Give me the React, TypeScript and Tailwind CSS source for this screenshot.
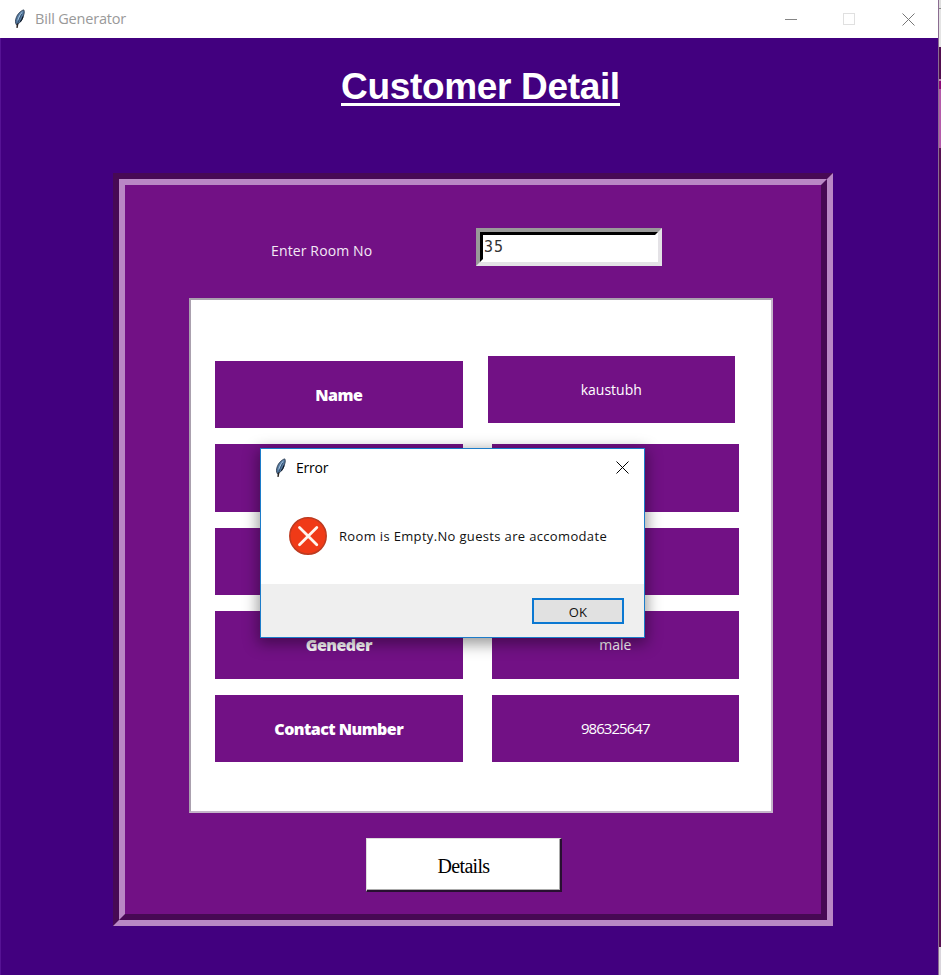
import type { ReactNode } from "react";

const LABELS = ["Name", "", "", "Geneder", "Contact Number"];
const VALUES = ["kaustubh", "", "", "male", "986325647"];

function Feather({ className = "" }: { className?: string }) {
  return (
    <svg width="14" height="20" viewBox="0 0 14 20" className={className}>
      <path d="M10.800 .9C8 1.500 4.600 4.600 3.200 8.800C2.200 11.700 2.200 14 3.600 16C6.500 14.600 9 11.300 10.100 8C11 5.200 11.800 2.600 10.800 .9Z" fill="#54799f" stroke="#2b3b50" strokeWidth=".9" />
      <path d="M9.900 2.300C7.500 3.800 5.200 7.500 4.200 11.800L5.600 11C6.800 7.500 8.600 4.800 9.900 2.300Z" fill="#a5c3de" />
      <path d="M8.600 5C7 8.500 5.500 12 4.600 15" fill="none" stroke="#2c4563" strokeWidth=".8" />
      <path d="M4.700 14.500L4 18.800" fill="none" stroke="#2a2421" strokeWidth="1.500" />
      <path d="M10 7.500L8.900 10.300L7.300 12.700" fill="none" stroke="#0e1622" strokeWidth="1.100" />
    </svg>
  );
}

function Cross({ color }: { color: string }) {
  return (
    <svg width="13" height="13" viewBox="0 0 13 13">
      <path d="M.5 .5L12.500 12.500M12.500 .5L.5 12.500" stroke={color} strokeWidth="1" />
    </svg>
  );
}

function Cell({ children, className = "" }: { children: ReactNode; className?: string }) {
  return (
    <div className={`flex h-[67.500px] w-[247.500px] shrink-0 items-center justify-center bg-[#721185] text-white ${className}`}>
      {children}
    </div>
  );
}

function ErrorDialog() {
  return (
    <div className="absolute left-[260px] top-[448px] flex h-[190px] w-[385px] flex-col border border-[#1c7cc9] bg-white shadow-[0_4px_14px_2px_rgba(0,0,0,0.4)]">
      <div className="flex h-[37px] shrink-0 items-center pl-[13px] pr-[15px]">
        <Feather />
        <span className="ml-2 text-[14px] tracking-[-0.200px] text-black">Error</span>
        <span className="ml-auto"><Cross color="#000" /></span>
      </div>
      <div className="flex grow items-center pl-7 pt-px">
        <svg width="38" height="38" viewBox="0 0 38 38" className="shrink-0">
          <circle cx="19" cy="19" r="18.200" fill="#f03a17" stroke="#bd3a20" strokeWidth="1.500" />
          <path d="M10.500 10.500L27.800 27.800M27.800 10.500L10.500 27.800" stroke="#fff5ee" strokeWidth="2.800" strokeLinecap="round" />
        </svg>
        <span className="ml-3 whitespace-nowrap pt-[3px] text-[13px] tracking-[0.340px] text-[#111]">Room is Empty.No guests are accomodate</span>
      </div>
      <div className="flex h-[53px] shrink-0 items-center justify-end bg-[#efefef] pr-5">
        <button className="flex h-[26px] w-[92px] items-center justify-center border-2 border-[#0b78d2] bg-[#e1e1e1] pt-[3px] text-[13px] leading-[18px] tracking-[0.300px] text-[#111]">OK</button>
      </div>
    </div>
  );
}

export default function App() {
  return (
    <div className="relative flex h-[975px] w-[941px] overflow-hidden bg-[#42007f] font-['Open_Sans','Noto_Sans',sans-serif]">
      <main className="flex w-[938px] shrink-0 flex-col">
        <header className="flex h-[38px] shrink-0 items-center bg-white pl-[13px] pr-[23px]">
          <Feather />
          <span className="ml-2 text-[14.500px] tracking-[-0.180px] text-[#999]">Bill Generator</span>
          <div className="ml-auto flex items-center">
            <span className="h-px w-3 bg-[#858585]" />
            <span className="ml-[46px] size-3 border border-[#e0e0e0]" />
            <span className="ml-[47px]"><Cross color="#777" /></span>
          </div>
        </header>
        <div className="flex grow flex-col items-start border-l border-[#561294]">
          <h1 className="ml-[340px] mt-[26px] h-[42px] w-[279px] whitespace-nowrap border-b-[3px] border-white font-['Liberation_Sans',Arial,sans-serif] text-[37px] font-bold leading-[46px] tracking-[-0.330px] text-white">Customer Detail</h1>
          <section className="ml-[112px] mt-[67px] h-[753px] w-[720px] border-[6px] border-b-[#b987c5] border-l-[#470954] border-r-[#b987c5] border-t-[#470954]">
            <div className="flex h-full flex-col items-start border-[6px] border-b-[#470954] border-l-[#b987c5] border-r-[#470954] border-t-[#b987c5] bg-[#721185]">
              <div className="ml-[146px] mt-[43px] flex h-[38px] shrink-0">
                <label className="w-[205px] pt-[11px] text-[14px] leading-[23px] tracking-[0.130px] text-[#f3e9f5]">Enter Room No</label>
                <div className="h-[38px] w-[186px] border-4 border-b-[#e4e2e6] border-l-[#999] border-r-[#e4e2e6] border-t-[#999]">
                  <div className="h-full border-[3px] border-b-white border-l-black border-r-white border-t-black bg-white pl-px font-['DejaVu_Sans_Mono',monospace] text-[15px] leading-[24px] tracking-[1px] text-[#333]">35</div>
                </div>
              </div>
              <div className="ml-16 mt-8 flex h-[515px] w-[584px] shrink-0 border-2 border-b-[#c5b5ca] border-l-[#aaa0ae] border-r-[#c5b5ca] border-t-[#aaa0ae] bg-white">
                <div className="ml-6 mt-[60.500px] flex flex-col gap-4">
                  {LABELS.map((t, i) => <Cell key={i} className="pt-px text-[16px] font-extrabold tracking-[-0.550px]">{t}</Cell>)}
                </div>
                <div className="ml-[29px] mt-[60.500px] flex flex-col gap-4">
                  {VALUES.map((t, i) => <Cell key={i} className={i === 0 ? "relative -left-1 -top-[5px] text-[14px]" : i === 4 ? "text-[15px] tracking-[-0.950px]" : "text-[14px]"}>{t}</Cell>)}
                </div>
              </div>
              <button className="ml-[241px] mt-[25px] flex h-[54px] w-[196px] shrink-0 items-center justify-center border-b-2 border-l border-r-2 border-t border-b-[#281030] border-l-[#ddd] border-r-[#281030] border-t-[#ddd] bg-white pt-0.5 font-['Liberation_Serif',serif] text-[20px] tracking-[-0.700px] text-black shadow-[inset_-1px_-1px_0_#aaa]">Details</button>
            </div>
          </section>
        </div>
      </main>
      <aside className="flex w-[3px] flex-col border-l border-[#8b6c91] bg-[#571052]">
        <div className="h-[9px] border-b border-[#888] bg-[#dedede]" />
        <div className="h-[38px] bg-[#e4e4e4]" />
        <div className="h-[32px] bg-[#520d50]" />
        <div className="h-[2px] bg-[#c485bd]" />
        <div className="h-[8px] bg-[#8c0878]" />
        <div className="h-[59px] bg-[#b45aaa]" />
        <div className="grow bg-[#571052]" />
        <div className="h-[28px] bg-[#d9d5dc]" />
      </aside>
      <ErrorDialog />
    </div>
  );
}
